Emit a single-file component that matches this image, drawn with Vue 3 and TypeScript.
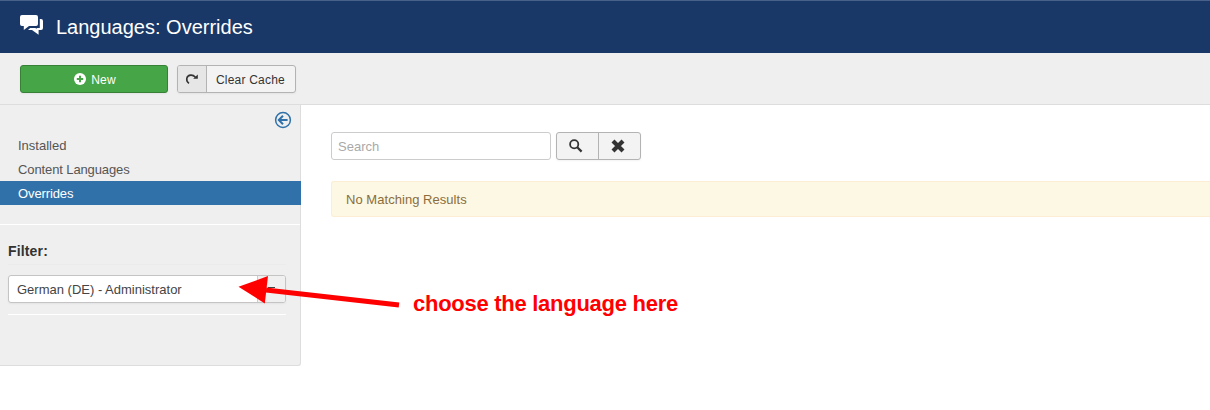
<script setup lang="ts">
import { ref } from 'vue'

const items: string[] = ['Installed', 'Content Languages', 'Overrides']
const active = ref('Overrides')
const search = ref('')
</script>

<template>
  <div class="page">
    <header class="header">
      <svg class="chat" width="24" height="21" viewBox="0 0 24 21">
        <path d="M2 0H16Q18 0 18 2V9Q18 11 16 11H9L3.8 15V11H2Q0 11 0 9V2Q0 0 2 0Z" fill="#fff" />
        <path d="M19.8 4H21Q23 4 23 6V13Q23 15 21 15H18.6V19.8L12 15H8L10.2 12.9H15.4L16.6 14V12.9H19.8Z" fill="#fff" />
      </svg>
      <h1>Languages: Overrides</h1>
    </header>

    <div class="toolbar">
      <button class="btn new">
        <svg width="12" height="12" viewBox="0 0 12 12">
          <circle cx="6" cy="6" r="6" fill="#fff" />
          <path d="M6 2.8V9.2M2.8 6H9.2" stroke="#46a546" stroke-width="2" />
        </svg>
        <span>New</span>
      </button>
      <button class="btn cache">
        <span class="cache-icon">
          <svg width="14" height="12" viewBox="0 0 14 12">
            <path d="M4 10.4C.4 8 1.2 2.4 5.7 2.1C7.8 2 9.2 2.8 10.4 4.2" fill="none" stroke="#333" stroke-width="1.6" />
            <path d="M12.8 1.4V5.8H8.2Z" fill="#333" />
          </svg>
        </span>
        <span class="cache-label">Clear Cache</span>
      </button>
    </div>

    <div class="body">
      <aside class="sidebar">
        <div class="toggle">
          <svg width="18" height="18" viewBox="0 0 18 18" fill="none" stroke="#3071a9">
            <circle cx="9" cy="9" r="7.4" stroke-width="1.5" />
            <path d="M13.6 9H5.2M9 4.8L4.8 9L9 13.2" stroke-width="2" />
          </svg>
        </div>
        <nav>
          <a v-for="item in items" :key="item" :class="{ active: item === active }" @click="active = item">{{ item }}</a>
        </nav>
        <div class="rule"></div>
        <section class="filter">
          <h4>Filter:</h4>
          <div class="faint"></div>
          <div class="select">
            <span class="value">German (DE) - Administrator</span>
            <span class="drop"><i></i></span>
          </div>
          <div class="line"></div>
        </section>
      </aside>

      <main class="main">
        <div class="search">
          <input v-model="search" type="text" placeholder="Search" />
          <div class="group">
            <button>
              <svg width="14" height="14" viewBox="0 0 14 14" fill="none" stroke="#333">
                <circle cx="5.2" cy="5.2" r="4.1" stroke-width="1.8" />
                <path d="M8 8L12.6 12.6" stroke-width="2.2" />
              </svg>
            </button>
            <button>
              <svg width="14" height="14" viewBox="0 0 14 14">
                <path d="M2 2L12 12M12 2L2 12" stroke="#333" stroke-width="4.2" />
              </svg>
            </button>
          </div>
        </div>
        <div class="alert">No Matching Results</div>
      </main>
    </div>

    <svg class="arrow" width="164" height="34" viewBox="0 0 164 34">
      <path d="M28 14.9L161 30" stroke="#f00" stroke-width="5" />
      <path d="M.5 11.8L30 1V1L26.8 28.4Z" fill="#f00" />
    </svg>
    <div class="note">choose the language here</div>
  </div>
</template>

<style>
body {
  margin: 0;
  overflow: hidden;
}
</style>

<style scoped>
.page {
  position: relative;
  height: 410px;
  overflow: hidden;
  background: #fff;
  color: #333;
  font: 13px/18px "Liberation Sans", Arial, sans-serif;
}
.page * {
  box-sizing: border-box;
}
button,
input {
  margin: 0;
  font: inherit;
}
svg {
  display: block;
  flex: none;
}
.header {
  display: flex;
  height: 53px;
  padding-left: 20px;
  border-top: 1px solid #48618a;
  background: #1a3867;
}
.chat {
  margin-top: 14px;
}
h1 {
  margin: 14px 0 0 12px;
  color: #fff;
  font-size: 20px;
  font-weight: normal;
  line-height: 24px;
  white-space: nowrap;
}
.toolbar {
  display: flex;
  gap: 9px;
  height: 52px;
  padding: 12px 20px 0;
  border-bottom: 1px solid #ddd;
  background: #efefef;
}
.btn {
  display: flex;
  align-items: center;
  height: 28px;
  padding: 0;
  border: 1px solid #b3b3b3;
  border-radius: 3px;
  background: #f3f3f3;
  box-shadow: 0 1px 2px rgba(0, 0, 0, 0.05);
  color: #333;
  font-size: 12px;
  overflow: hidden;
}
.new {
  justify-content: center;
  gap: 5px;
  width: 148px;
  padding-left: 2px;
  border-color: #378137;
  background: #46a546;
  color: #fff;
}
.new span {
  padding-top: 2px;
  letter-spacing: 0.2px;
}
.cache {
  width: 119px;
}
.cache-icon {
  display: flex;
  align-items: center;
  justify-content: center;
  width: 29px;
  height: 26px;
  border-right: 1px solid #b3b3b3;
  background: #e6e6e6;
}
.cache-label {
  padding: 2px 0 0 9px;
  letter-spacing: 0.2px;
  white-space: nowrap;
}
.body {
  display: flex;
  align-items: flex-start;
}
.sidebar {
  flex: none;
  width: 301px;
  height: 261px;
  border-right: 1px solid #ddd;
  border-bottom: 1px solid #ddd;
  border-radius: 0 0 3px 0;
  background: #efefef;
}
.toggle {
  display: flex;
  justify-content: flex-end;
  height: 28px;
  padding: 6px 8px 0 0;
}
nav a {
  display: block;
  height: 24px;
  padding: 4px 18px 0;
  color: #555;
  line-height: 18px;
}
nav a:nth-child(n + 2) {
  letter-spacing: -0.11px;
}
nav a.active {
  margin-right: -1px;
  background: #3071a9;
  color: #fff;
}
.rule {
  height: 1px;
  margin-top: 19px;
  background: #fff;
}
.filter {
  padding: 17px 14px 0 8px;
}
h4 {
  margin: 0;
  font-size: 14px;
  letter-spacing: 0.15px;
  line-height: 18px;
}
.faint {
  height: 1px;
  margin: 4px 0 10px;
  background: #ebebeb;
}
.select {
  display: flex;
  height: 28px;
  border: 1px solid #c4c4c4;
  border-radius: 3px;
  background: #fff;
  box-shadow: 0 1px 2px rgba(0, 0, 0, 0.05);
  color: #444;
  overflow: hidden;
}
.value {
  flex: 1;
  padding: 5px 0 0 8px;
}
.drop {
  width: 28px;
  border-left: 1px solid #ccc;
  background: #f0f0f0;
}
.drop i {
  display: block;
  width: 7px;
  height: 1px;
  margin: 11px 0 0 10px;
  background: #444;
}
.line {
  height: 1px;
  margin-top: 11px;
  background: #fff;
}
.main {
  flex: 1;
  min-width: 0;
  padding: 27px 0 0 30px;
}
.search {
  display: flex;
  gap: 5px;
}
input {
  width: 220px;
  height: 28px;
  padding: 0 6px;
  border: 1px solid #ccc;
  border-radius: 3px;
  outline: none;
  background: #fff;
  color: #555;
}
input::placeholder {
  color: #a9a9a9;
}
.group {
  display: flex;
  width: 85px;
  height: 28px;
  border: 1px solid #b3b3b3;
  border-radius: 3px;
  background: #f3f3f3;
  box-shadow: 0 1px 2px rgba(0, 0, 0, 0.05);
}
.group button {
  display: flex;
  width: 41px;
  padding: 6px 0 0 12px;
  border: 0;
  background: none;
}
.group button + button {
  width: 43px;
  border-left: 1px solid #b3b3b3;
}
.alert {
  height: 36px;
  margin-top: 21px;
  padding: 9px 14px 0;
  border: 1px solid #fbeed5;
  border-right: 0;
  border-radius: 3px 0 0 3px;
  background: #fcf8e3;
  color: #8a6d3b;
  letter-spacing: 0.04px;
}
.arrow {
  position: absolute;
  left: 238px;
  top: 275px;
}
.note {
  position: absolute;
  left: 413px;
  top: 291px;
  color: #f00;
  font-size: 22px;
  font-weight: bold;
  letter-spacing: -0.27px;
  line-height: 26px;
  white-space: nowrap;
}
</style>
